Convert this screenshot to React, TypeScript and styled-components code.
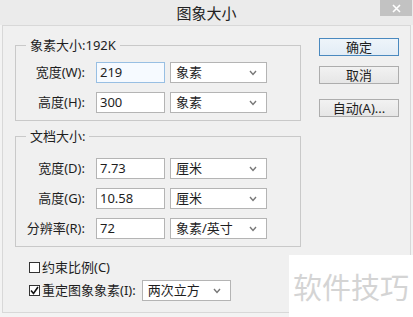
import React from 'react';
import styled, { createGlobalStyle } from 'styled-components';

const GlobalStyle = createGlobalStyle`
  html, body {
    margin: 0;
    padding: 0;
    background: #ececec;
  }
  body {
    font-family: "Noto Sans", "Noto Sans CJK SC", sans-serif;
    font-size: 13px;
    color: #1e1e1e;
  }
`;

const Window = styled.div`
  position: relative;
  width: 413px;
  height: 317px;
  overflow: hidden;
  background: #f3f3f3;
  display: flex;
  flex-direction: column;
`;

const TitleBar = styled.div`
  flex: none;
  height: 25px;
  background: #ebebeb;
  display: grid;
  grid-template-columns: 1fr auto 1fr;
  align-items: start;
`;

const Title = styled.div`
  grid-column: 2;
  font-family: "Noto Sans CJK SC", sans-serif;
  font-size: 15px;
  line-height: 25px;
  color: #222;
`;

const CloseButton = styled.div`
  grid-column: 3;
  justify-self: end;
  margin-right: 1px;
  width: 32px;
  height: 16px;
  background: #c2c2c2;
  display: flex;
  align-items: center;
  justify-content: center;
`;

const Client = styled.div`
  flex: none;
  height: 288px;
  box-sizing: border-box;
  margin: 0 2px 0 2px;
  border: 1px solid #d8d8d8;
  background: #f0f0f0;
  padding: 11px 0 0 12px;
  display: flex;
  gap: 18px;
`;

const LeftColumn = styled.div`
  width: 286px;
  display: flex;
  flex-direction: column;
`;

const Group = styled.fieldset<{ $top: number; $gap?: number }>`
  margin: ${p => p.$gap ?? 0}px 0 0 0;
  padding: ${p => p.$top}px 0 7px 0;
  border: 1px solid #c9c9c9;
  min-width: 0;
  display: flex;
  flex-direction: column;
  gap: 9px;
`;

const Legend = styled.legend`
  margin-left: 10px;
  padding: 0 4px;
  font-size: 13px;
  line-height: 16px;
  color: #1e1e1e;
`;

const Row = styled.div`
  display: flex;
  align-items: center;
  height: 21px;
`;

const Label = styled.div`
  width: 69px;
  margin-right: 11px;
  text-align: right;
  line-height: 21px;
  white-space: nowrap;
`;

const Field = styled.div<{ $focused?: boolean }>`
  width: 69px;
  height: 21px;
  box-sizing: border-box;
  margin-right: 5px;
  padding: 0 3px;
  background: ${p => (p.$focused ? '#f6faff' : '#fff')};
  border: 1px solid ${p => (p.$focused ? '#98bfe3' : '#b4b4b4')};
  line-height: 19px;
`;

const Combo = styled.div<{ $width: number }>`
  width: ${p => p.$width}px;
  height: 21px;
  box-sizing: border-box;
  padding: 0 9px 0 5px;
  background: #fff;
  border: 1px solid #b4b4b4;
  display: flex;
  align-items: center;
  justify-content: space-between;
  line-height: 19px;
`;

const Options = styled.div`
  margin-top: 10px;
  padding-left: 14px;
  display: flex;
  flex-direction: column;
  gap: 2px;
`;

const OptionRow = styled.label`
  display: flex;
  align-items: center;
  height: 21px;
`;

const Box = styled.span`
  width: 11px;
  height: 11px;
  box-sizing: border-box;
  border: 1px solid #333;
  background: #fff;
  margin-right: 2px;
  display: flex;
  align-items: center;
  justify-content: center;
`;

const OptionText = styled.span`
  line-height: 21px;
  margin-right: 6px;
`;

const Buttons = styled.div`
  width: 80px;
  padding-top: 1px;
  display: flex;
  flex-direction: column;
`;

const Button = styled.div<{ $primary?: boolean; $gap: number }>`
  margin-top: ${p => p.$gap}px;
  height: 18px;
  box-sizing: border-box;
  border: 1px solid ${p => (p.$primary ? '#4a89bf' : '#adadad')};
  background: ${p =>
    p.$primary
      ? 'linear-gradient(#eef4fa, #e2ecf6)'
      : 'linear-gradient(#f2f2f2, #e6e6e6)'};
  text-align: center;
  line-height: 16px;
  font-size: 13px;
`;

const Watermark = styled.div`
  position: absolute;
  right: 0;
  bottom: 0;
  width: 124px;
  height: 62px;
  background: #fff;
  display: flex;
  align-items: center;
  justify-content: center;
  font-family: "Noto Sans CJK SC", sans-serif;
  font-size: 29px;
  color: #d4d4d4;
`;

const Chevron = () => (
  <svg width="8" height="6" viewBox="0 0 8 6">
    <polyline points="1,1 4,4.5 7,1" fill="none" stroke="#777" strokeWidth="1.4" />
  </svg>
);

const CheckMark = () => (
  <svg width="9" height="9" viewBox="0 0 9 9">
    <polyline points="1,4.5 3.5,7.5 8,1" fill="none" stroke="#111" strokeWidth="1.6" />
  </svg>
);

const pixelRows = [
  { label: '宽度(W):', value: '219', unit: '象素', focused: true },
  { label: '高度(H):', value: '300', unit: '象素' },
];

const docRows = [
  { label: '宽度(D):', value: '7.73', unit: '厘米' },
  { label: '高度(G):', value: '10.58', unit: '厘米' },
  { label: '分辨率(R):', value: '72', unit: '象素/英寸' },
];

export default function App() {
  return (
    <Window>
      <GlobalStyle />
      <TitleBar>
        <Title>图象大小</Title>
        <CloseButton>
          <svg width="9" height="9" viewBox="0 0 9 9">
            <path d="M1 1 L8 8 M8 1 L1 8" stroke="#fff" strokeWidth="1.6" />
          </svg>
        </CloseButton>
      </TitleBar>
      <Client>
        <LeftColumn>
          <Group $top={9}>
            <Legend>象素大小:192K</Legend>
            {pixelRows.map(r => (
              <Row key={r.label}>
                <Label>{r.label}</Label>
                <Field $focused={r.focused}>{r.value}</Field>
                <Combo $width={97}>
                  <span>{r.unit}</span>
                  <Chevron />
                </Combo>
              </Row>
            ))}
          </Group>
          <Group $top={14} $gap={7}>
            <Legend>文档大小:</Legend>
            {docRows.map(r => (
              <Row key={r.label}>
                <Label>{r.label}</Label>
                <Field>{r.value}</Field>
                <Combo $width={97}>
                  <span>{r.unit}</span>
                  <Chevron />
                </Combo>
              </Row>
            ))}
          </Group>
          <Options>
            <OptionRow>
              <Box />
              <OptionText>约束比例(C)</OptionText>
            </OptionRow>
            <OptionRow>
              <Box>
                <CheckMark />
              </Box>
              <OptionText>重定图象象素(I):</OptionText>
              <Combo $width={89}>
                <span>两次立方</span>
                <Chevron />
              </Combo>
            </OptionRow>
          </Options>
        </LeftColumn>
        <Buttons>
          <Button $primary $gap={0}>确定</Button>
          <Button $gap={10}>取消</Button>
          <Button $gap={15}>自动(A)...</Button>
        </Buttons>
      </Client>
      <Watermark>软件技巧</Watermark>
    </Window>
  );
}
